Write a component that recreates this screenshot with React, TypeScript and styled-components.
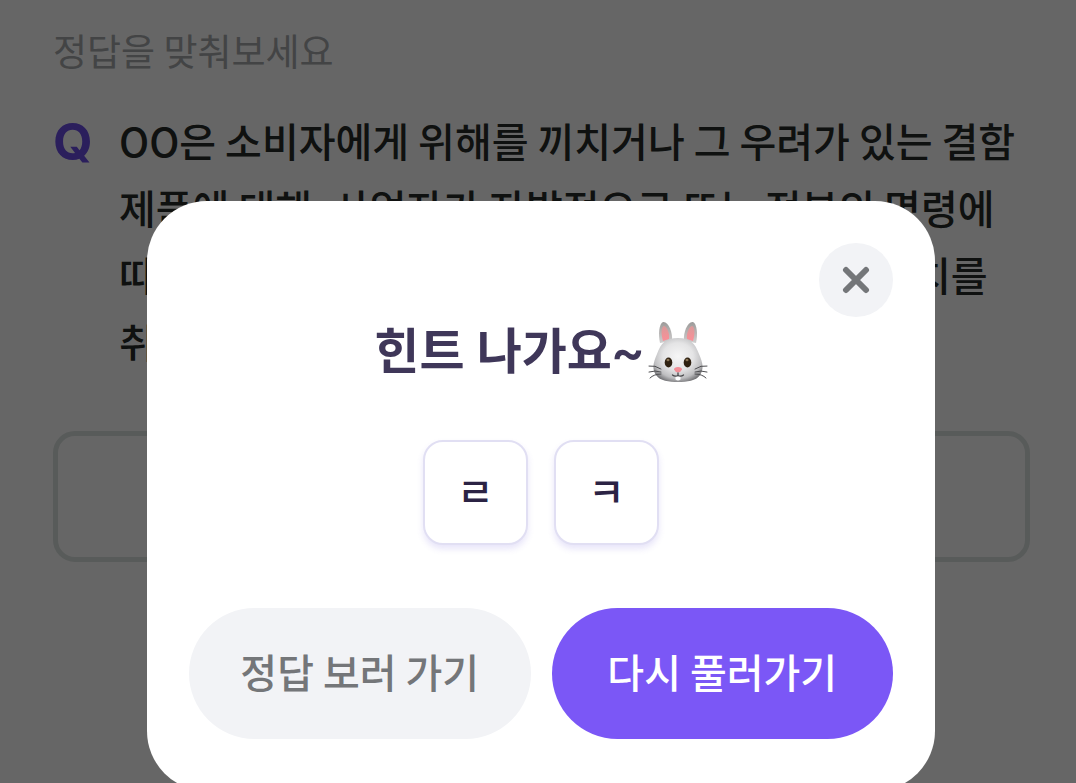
import React from "react";
import styled, { createGlobalStyle } from "styled-components";

const GlobalStyle = createGlobalStyle`
  *, *::before, *::after { box-sizing: border-box; }
  body {
    margin: 0;
    background: #ffffff;
    font-family: "Noto Sans CJK KR", "Noto Sans", sans-serif;
  }
  h1, h2, p { margin: 0; }
  button, input { font-family: inherit; }
`;

const Page = styled.main`
  min-height: 100vh;
  padding: 24px 46px 0 53px;
`;

const Guide = styled.p`
  font-size: 37px;
  line-height: 52px;
  color: #a7aaad;
`;

const Question = styled.section`
  display: flex;
  align-items: flex-start;
  gap: 28px;
  margin-top: 31px;
`;

const QuestionMark = styled.span`
  flex: none;
  width: 38px;
  font-family: Inter, sans-serif;
  font-size: 51px;
  font-weight: 700;
  line-height: 70px;
  color: #6b4fe6;
`;

const QuestionText = styled.h1`
  flex: 1;
  font-size: 40px;
  font-weight: 500;
  line-height: 67px;
  word-break: keep-all;
  color: #272b29;
`;

const AnswerInput = styled.input`
  display: block;
  width: 100%;
  height: 131px;
  margin-top: 56px;
  padding: 0 32px;
  border: 5px solid #dde3e1;
  border-radius: 22px;
  background: #ffffff;
  font-size: 40px;
  text-align: center;
`;

const Overlay = styled.div`
  position: fixed;
  inset: 0;
  display: flex;
  align-items: flex-start;
  padding: 201px 141px 0 147px;
  overflow: hidden;
  background: rgba(0, 0, 0, 0.6);
`;

const Modal = styled.div`
  flex: 1;
  display: flex;
  flex-direction: column;
  padding: 42px 42px 52px;
  border-radius: 60px;
  background: #ffffff;
`;

const CloseButton = styled.button`
  display: flex;
  align-items: center;
  justify-content: center;
  align-self: flex-end;
  width: 74px;
  height: 74px;
  padding: 0;
  border: 0;
  border-radius: 50%;
  background: #f2f3f6;
  color: #747679;
  cursor: pointer;
`;

const ModalTitle = styled.h2`
  display: flex;
  align-items: center;
  justify-content: center;
  gap: 4px;
  font-family: Roboto, "Noto Sans CJK KR", sans-serif;
  font-size: 49px;
  font-weight: 700;
  line-height: 72px;
  color: #3f3759;
`;

const HintRow = styled.div`
  display: flex;
  justify-content: center;
  gap: 26px;
  margin-top: 51px;
`;

const HintTile = styled.span`
  display: flex;
  align-items: center;
  justify-content: center;
  width: 105px;
  height: 105px;
  padding-bottom: 5px;
  border: 2px solid #e1dff3;
  border-radius: 20px;
  background: #ffffff;
  box-shadow: 0 4px 6px rgba(110, 96, 220, 0.16);
  font-size: 40px;
  font-weight: 500;
  line-height: 58px;
  color: #2b2344;
`;

const Actions = styled.div`
  display: flex;
  gap: 21px;
  margin-top: 63px;
`;

const ActionButton = styled.button<{ $primary?: boolean }>`
  flex: 1;
  height: 131px;
  padding: 0 0 5px;
  border: 0;
  border-radius: 66px;
  background: ${(p) => (p.$primary ? "#7b57f6" : "#f2f3f6")};
  color: ${(p) => (p.$primary ? "#ffffff" : "#747679")};
  font-size: 40px;
  font-weight: 500;
  cursor: pointer;
`;

function CloseIcon() {
  return (
    <svg width="28" height="28" viewBox="0 0 28 28" fill="none" aria-hidden="true">
      <path d="M4 4 L24 24 M24 4 L4 24" stroke="currentColor" strokeWidth="6" strokeLinecap="round" />
    </svg>
  );
}

function RabbitIcon() {
  return (
    <svg width="60" height="64" viewBox="0 0 60 64" role="img" aria-label="토끼">
      <defs>
        <radialGradient id="face" cx="0.5" cy="0.42" r="0.62">
          <stop offset="0" stopColor="#f6f6f6" />
          <stop offset="0.5" stopColor="#e4e4e5" />
          <stop offset="0.8" stopColor="#bebec0" />
          <stop offset="1" stopColor="#6f6f72" />
        </radialGradient>
        <linearGradient id="ear" x1="0" y1="0" x2="0" y2="1">
          <stop offset="0" stopColor="#9c9a99" />
          <stop offset="1" stopColor="#d0cfcf" />
        </linearGradient>
        <linearGradient id="inner" x1="0" y1="0" x2="0" y2="1">
          <stop offset="0" stopColor="#d99a9a" />
          <stop offset="1" stopColor="#fb8f97" />
        </linearGradient>
      </defs>
      <path d="M12 22 C10 13 11 3 15 1 C20 0 25 11 24 20 Z" fill="url(#ear)" />
      <path d="M48 22 C50 13 49 3 45 1 C40 0 35 11 36 20 Z" fill="url(#ear)" />
      <path d="M15 20 C13 13 13 7 15.500 5 C19 5 22 13 21 18 Z" fill="url(#inner)" />
      <path d="M45 20 C47 13 47 7 44.500 5 C41 5 38 13 39 18 Z" fill="url(#inner)" />
      <path d="M30 17 C42 17 47 22 51 33 C55 42 56 48 52 54 C48 60 39 61 30 61 C21 61 12 60 8 54 C4 48 5 42 9 33 C13 22 18 17 30 17 Z" fill="url(#face)" />
      <g fill="none" stroke="#4c4c4f" strokeWidth="1" strokeLinecap="round">
        <path d="M13 48 Q7 44 1 45 M13 51 Q7 49 1 51 M13 53 Q6 53 2 57" />
        <path d="M47 48 Q53 44 59 45 M47 51 Q53 49 59 51 M47 53 Q54 53 58 57" />
      </g>
      <ellipse cx="20.500" cy="41.500" rx="3.800" ry="5" fill="#2e2010" />
      <ellipse cx="39.500" cy="41.500" rx="3.800" ry="5" fill="#2e2010" />
      <ellipse cx="20" cy="39" rx="1.500" ry="1.200" fill="#8a7455" />
      <ellipse cx="39" cy="39" rx="1.500" ry="1.200" fill="#8a7455" />
      <path d="M26 48.500 Q26 46 30 46 Q34 46 34 48.500 Q33 51 30 51.500 Q27 51 26 48.500 Z" fill="#f28f97" />
      <path d="M27.500 55.500 h5 v3 q-2.500 2 -5 0 Z" fill="#ffffff" />
      <path d="M24.500 54 Q27 56 30 54.500 Q33 56 35.500 54 M30 52 V54.500" fill="none" stroke="#48484a" strokeWidth="1.300" strokeLinecap="round" />
    </svg>
  );
}

const hints = ["ㄹ", "ㅋ"];

export default function App() {
  return (
    <>
      <GlobalStyle />
      <Page>
        <Guide>정답을 맞춰보세요</Guide>
        <Question>
          <QuestionMark>Q</QuestionMark>
          <QuestionText id="question">
            OO은 소비자에게 위해를 끼치거나 그 우려가 있는 결함 제품에 대해, 사업자가 자발적으로 또는
            정부의 명령에 따라 제품을 수거, 파기, 수리 교환 등의 필요한 조치를 취하는 것
          </QuestionText>
        </Question>
        <AnswerInput type="text" aria-labelledby="question" />
      </Page>
      <Overlay>
        <Modal role="dialog" aria-modal="true" aria-labelledby="hint-title">
          <CloseButton type="button" aria-label="닫기">
            <CloseIcon />
          </CloseButton>
          <ModalTitle id="hint-title">
            힌트 나가요~
            <RabbitIcon />
          </ModalTitle>
          <HintRow>
            {hints.map((hint) => (
              <HintTile key={hint}>{hint}</HintTile>
            ))}
          </HintRow>
          <Actions>
            <ActionButton type="button">정답 보러 가기</ActionButton>
            <ActionButton type="button" $primary>
              다시 풀러가기
            </ActionButton>
          </Actions>
        </Modal>
      </Overlay>
    </>
  );
}
